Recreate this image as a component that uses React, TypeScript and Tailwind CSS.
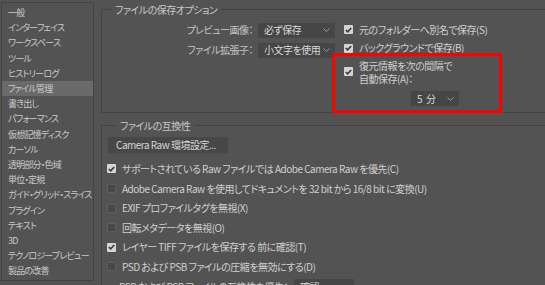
import React from 'react';

const sections = [
  '一般',
  'インターフェイス',
  'ワークスペース',
  'ツール',
  'ヒストリーログ',
  'ファイル管理',
  '書き出し',
  'パフォーマンス',
  '仮想記憶ディスク',
  'カーソル',
  '透明部分・色域',
  '単位・定規',
  'ガイド・グリッド・スライス',
  'プラグイン',
  'テキスト',
  '3D',
  'テクノロジープレビュー',
  '製品の改善',
];

const compat = [
  { label: 'サポートされている Raw ファイルでは Adobe Camera Raw を優先(C)', checked: true },
  { label: 'Adobe Camera Raw を使用してドキュメントを 32 bit から 16/8 bit に変換(U)', checked: false },
  { label: 'EXIF プロファイルタグを無視(X)', checked: false },
  { label: '回転メタデータを無視(O)', checked: false },
  { label: 'レイヤー TIFF ファイルを保存する 前に確認(T)', checked: true },
  { label: 'PSD および PSB ファイルの圧縮を無効にする(D)', checked: false },
];

const Chevron = () => (
  <svg width="7" height="4" viewBox="0 0 7 4" className="shrink-0">
    <path d="M0.5 0.5 L3.5 3.5 L6.5 0.5" fill="none" stroke="#9a9a9a" strokeWidth="1" />
  </svg>
);

const Select: React.FC<{ value: React.ReactNode; width: string }> = ({ value, width }) => (
  <div className={`${width} h-[15px] bg-[#464646] flex items-center justify-between pl-[6px] pr-[5px] text-[#dadada] whitespace-nowrap`}>
    <span>{value}</span>
    <Chevron />
  </div>
);

const Checkbox: React.FC<{ checked: boolean }> = ({ checked }) =>
  checked ? (
    <div className="w-[9px] h-[9px] shrink-0 rounded-[1px] bg-[#d4d4d4] flex items-center justify-center">
      <svg width="7" height="6" viewBox="0 0 7 6">
        <path d="M0.8 3 L2.7 4.8 L6.2 1" fill="none" stroke="#383838" strokeWidth="1.6" />
      </svg>
    </div>
  ) : (
    <div className="w-[9px] h-[9px] shrink-0 rounded-[1px] bg-[#474747] border border-[#5e5e5e]" />
  );

export default function App() {
  return (
    <div className="w-[545px] h-[285px] overflow-hidden flex bg-[#535353] text-[10px] tracking-[-0.5px] leading-none text-[#d0d0d0] font-['Noto_Sans_CJK_JP','Noto_Sans',sans-serif] [font-feature-settings:'palt']">
      <aside className="ml-[1px] mt-[2px] w-[93px] h-[279px] shrink-0 border border-[#434343] pt-[2px] flex flex-col text-[9px] tracking-[-0.8px] text-[#cacaca]">
        {sections.map((s, i) => (
          <div
            key={s}
            className={`h-[15.2px] pl-[6px] flex items-center whitespace-nowrap ${i === 5 ? 'bg-[#6a6a6a]' : ''}`}
          >
            {s}
          </div>
        ))}
      </aside>

      <main className="ml-[7px] mt-[1.5px] w-[470px] shrink-0 flex flex-col">
        <fieldset className="border border-[#434343] flex items-start">
          <legend className="ml-[9px] px-[4px] leading-[15px] text-[#c8c8c8]">ファイルの保存オプション</legend>
          <div className="w-[233px] pt-[6px] flex flex-col items-end gap-[5px]">
            <div className="flex items-center gap-[5px]">
              <span className="text-[#c4c4c4]">プレビュー画像：</span>
              <Select value="必ず保存" width="w-[77px]" />
            </div>
            <div className="flex items-center gap-[5px]">
              <span className="text-[#c4c4c4]">ファイル拡張子：</span>
              <Select value="小文字を使用" width="w-[77px]" />
            </div>
          </div>
          <div className="ml-[9px] pt-[6.5px] flex flex-col whitespace-nowrap">
            <div className="h-[13px] flex items-center gap-[6px]">
              <Checkbox checked />
              <span>元のフォルダーへ別名で保存(S)</span>
            </div>
            <div className="h-[13px] mt-[5.5px] flex items-center gap-[6px]">
              <Checkbox checked />
              <span>バックグラウンドで保存(B)</span>
            </div>
            <div className="relative -ml-[12px] -mt-[1.5px] -mb-[1px] w-[170px] h-[60px] border-[3px] border-[#ff0000] pl-[9px] pt-[2.5px]">
              <div className="flex items-center gap-[6px]">
                <Checkbox checked />
                <div className="leading-[13px]">
                  <div>復元情報を次の間隔で</div>
                  <div>自動保存(A)：</div>
                </div>
              </div>
              <div className="ml-[67px] mt-[6.5px]">
                <Select
                  value={
                    <>
                      5<span className="ml-[4px]">分</span>
                    </>
                  }
                  width="w-[48px]"
                />
              </div>
            </div>
          </div>
        </fieldset>

        <fieldset className="mt-[4.5px] border border-[#434343] pl-[5px] pt-[4.5px]">
          <legend className="ml-[9px] px-[4px] leading-[15px] text-[#c8c8c8]">ファイルの互換性</legend>
          <button className="ml-[1px] w-[120px] h-[16px] bg-[#474747] text-left pl-[8px] text-[#d6d6d6] whitespace-nowrap">
            Camera Raw 環境設定...
          </button>
          <div className="mt-[6.2px] flex flex-col">
            {compat.map((c) => (
              <div key={c.label} className="h-[19.6px] flex items-center gap-[6px] whitespace-nowrap">
                <Checkbox checked={c.checked} />
                <span>{c.label}</span>
              </div>
            ))}
            <div className="h-[19.6px] pl-[12px] flex items-center gap-[6px] whitespace-nowrap">
              <span>PSD および PSB ファイルの互換性を優先：</span>
              <Select value="確認" width="w-[60px]" />
            </div>
          </div>
        </fieldset>
      </main>
    </div>
  );
}
